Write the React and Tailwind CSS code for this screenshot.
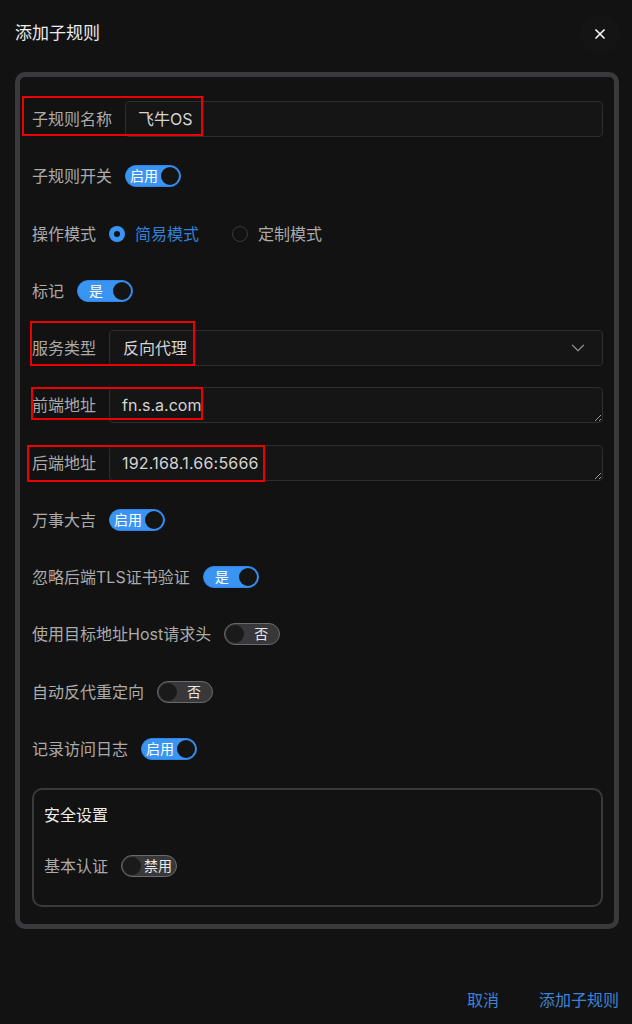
import React from 'react';
import { ChevronDown, X } from 'lucide-react';

const Switch = ({ on, text }) => {
  if (on) {
    return (
      <div className="flex items-center w-14 h-[22px] rounded-full bg-[#3a94f4] border border-[#2f86e6] p-[1px]">
        <span className="flex-1 text-center text-[14px] leading-none text-white">{text}</span>
        <span className="w-[18px] h-[18px] rounded-full bg-[#141414]" />
      </div>
    );
  }
  return (
    <div className="flex items-center w-14 h-[22px] rounded-full bg-[#38383b] border border-[#6a6a6d] p-[1px]">
      <span className="w-[18px] h-[18px] rounded-full bg-[#1a1a1a]" />
      <span className="flex-1 text-center text-[14px] leading-none text-[#e8e8e8]">{text}</span>
    </div>
  );
};

// red annotation boxes drawn over the form
const Mark = ({ className }) => (
  <div className={`absolute border-2 border-[#ee0000] pointer-events-none ${className}`} />
);

const Row = ({ label, children, mark }) => (
  <div className="relative flex items-center h-9 mb-[21.27px]">
    <span className="text-[16px] text-[#ababab] mr-[13px] whitespace-nowrap">{label}</span>
    {children}
    {mark}
  </div>
);

export default function App() {
  return (
    <div
      className="w-full min-h-[1024px] bg-[#121212] flex flex-col"
      style={{ fontFamily: 'Inter, "Noto Sans CJK SC", sans-serif' }}
    >
      {/* Header */}
      <div className="h-[68px] flex items-center justify-between pl-[15px] pr-[12px]">
        <h1 className="text-[17px] text-[#ececec]">添加子规则</h1>
        <button className="w-10 h-10 rounded-full bg-[#141414] flex items-center justify-center text-white">
          <X size={16} strokeWidth={2.5} />
        </button>
      </div>

      {/* Form frame */}
      <div className="mt-1 ml-[15px] mr-[13px] border-[5px] border-[#3a3a3c] rounded-[10px] pl-3 pr-[11px] pt-6 pb-[17px]">
        <Row label="子规则名称" mark={<Mark className="-left-[10px] -top-[5px] w-[181px] h-[40px]" />}>
          <div className="flex-1 h-9 rounded-[4px] border border-[#2e2e31] bg-[#151515] px-3 flex items-center text-[16px] text-[#d4d4d4]">
            飞牛OS
          </div>
        </Row>

        <Row label="子规则开关">
          <Switch on text="启用" />
        </Row>

        <Row label="操作模式">
          <div className="flex items-center">
            <span className="w-4 h-4 rounded-full bg-[#3a94f4] flex items-center justify-center">
              <span className="w-[6px] h-[6px] rounded-full bg-[#121212]" />
            </span>
            <span className="ml-[10px] text-[16px] text-[#2f82dc]">简易模式</span>
            <span className="ml-[33px] w-4 h-4 rounded-full border-[1.5px] border-[#38383a]" />
            <span className="ml-[10px] text-[16px] text-[#ababab]">定制模式</span>
          </div>
        </Row>

        <Row label="标记">
          <Switch on text="是" />
        </Row>

        <Row label="服务类型" mark={<Mark className="-left-[2px] -top-[9px] w-[165px] h-[45px]" />}>
          <div className="flex-1 h-9 rounded-[4px] border border-[#2e2e31] bg-[#151515] pl-[13px] pr-[13px] flex items-center justify-between text-[16px] text-[#d4d4d4]">
            <span>反向代理</span>
            <ChevronDown size={22} strokeWidth={1.3} className="text-[#8d8d8d]" />
          </div>
        </Row>

        <Row label="前端地址" mark={<Mark className="-left-[1px] top-0 w-[172px] h-[33px]" />}>
          <textarea
            readOnly
            rows={1}
            value="fn.s.a.com"
            className="flex-1 h-9 rounded-[4px] border border-[#2e2e31] bg-[#151515] px-3 py-[5px] text-[16px] leading-6 text-[#d4d4d4] outline-none overflow-hidden [color-scheme:dark]"
          />
        </Row>

        <Row label="后端地址" mark={<Mark className="-left-[5px] top-0 w-[238px] h-[37px]" />}>
          <textarea
            readOnly
            rows={1}
            value="192.168.1.66:5666"
            className="flex-1 h-9 rounded-[4px] border border-[#2e2e31] bg-[#151515] px-3 py-[5px] text-[16px] leading-6 tracking-[0.2px] text-[#d4d4d4] outline-none overflow-hidden [color-scheme:dark]"
          />
        </Row>

        <Row label="万事大吉">
          <Switch on text="启用" />
        </Row>

        <Row label="忽略后端TLS证书验证">
          <Switch on text="是" />
        </Row>

        <Row label="使用目标地址Host请求头">
          <Switch text="否" />
        </Row>

        <Row label="自动反代重定向">
          <Switch text="否" />
        </Row>

        <Row label="记录访问日志">
          <Switch on text="启用" />
        </Row>

        {/* Security settings */}
        <div className="rounded-[10px] border-2 border-[#3a3a3c] pl-[10px] pr-3 pt-[13px] pb-[21px]">
          <h2 className="text-[16px] leading-6 text-[#ececec]">安全设置</h2>
          <div className="flex items-center h-9 mt-[21px]">
            <span className="text-[16px] text-[#ababab] mr-[13px]">基本认证</span>
            <Switch text="禁用" />
          </div>
        </div>
      </div>

      {/* Footer */}
      <div className="flex justify-end items-center pt-[59px] pr-[13px] gap-[40px]">
        <button className="text-[16px] leading-6 text-[#3d84d8]">取消</button>
        <button className="text-[16px] leading-6 text-[#3d84d8]">添加子规则</button>
      </div>
    </div>
  );
}
